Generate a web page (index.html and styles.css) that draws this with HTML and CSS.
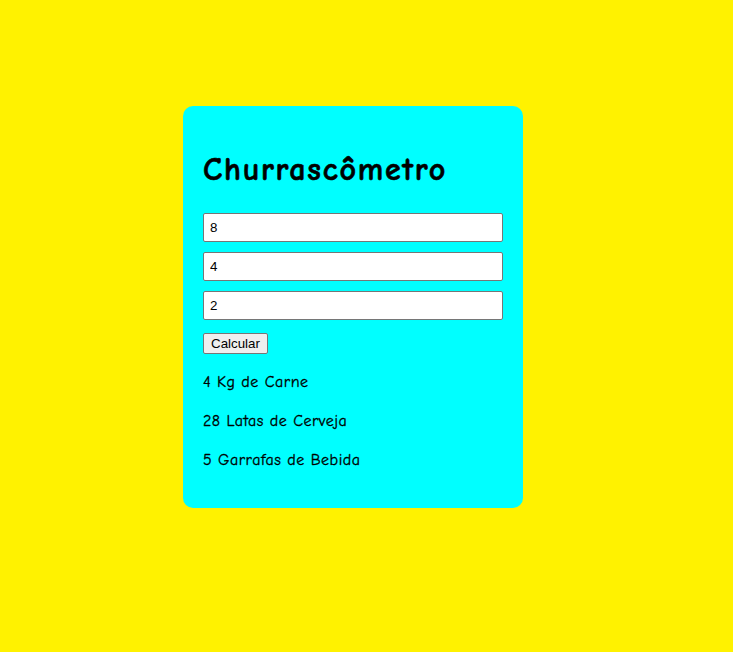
FILE: index.html
```html
<!DOCTYPE html>
<html lang="pt-BR">
<head>
<meta charset="utf-8">
<title>Churrascômetro</title>
<link rel="stylesheet" href="styles.css">
</head>
<body>
<main class="card">
  <h1 class="title">Churrascômetro</h1>
  <input class="field" type="number" value="8">
  <input class="field" type="number" value="4">
  <input class="field" type="number" value="2">
  <button class="btn">Calcular</button>
  <div class="results">
    <p class="result">4 Kg de Carne</p>
    <p class="result">28 Latas de Cerveja</p>
    <p class="result">5 Garrafas de Bebida</p>
  </div>
</main>
</body>
</html>
```
FILE: styles.css
```css
html, body {
  margin: 0;
  padding: 0;
}
body {
  background: #fff200;
  min-height: 652px;
  padding: 106px 0 0 183px;
  box-sizing: border-box;
  font-family: "Comic Sans MS", "Comic Neue", "DejaVu Sans", sans-serif;
}
.card {
  width: 340px;
  box-sizing: border-box;
  background: #00ffff;
  border-radius: 10px;
  padding: 20px;
  display: flex;
  flex-direction: column;
  align-items: flex-start;
}
.title {
  font-size: 32px;
  line-height: 45px;
  font-weight: bold;
  margin: 21px 0 21px 0;
  letter-spacing: 1.75px;
  -webkit-text-stroke: 0.6px #000;
}
.field {
  width: 300px;
  height: 29px;
  box-sizing: border-box;
  margin: 0 0 10px 0;
  padding: 0 6px;
  border: 1px solid #767676;
  border-radius: 2px;
  background: #fff;
  font-family: "Liberation Sans", Arial, sans-serif;
  font-size: 13.33px;
  color: #000;
  -moz-appearance: textfield;
}
.field::-webkit-inner-spin-button,
.field::-webkit-outer-spin-button {
  -webkit-appearance: none;
  margin: 0;
}
.btn {
  margin-top: 3px;
  height: 21px;
  padding: 0 7px;
  font-family: "Liberation Sans", Arial, sans-serif;
  font-size: 13.33px;
  color: #000;
  background: #efefef;
  border: 1px solid #767676;
  border-radius: 2px;
}
.results {
  display: flex;
  flex-direction: column;
  padding-top: 1px;
}
.result {
  margin: 16px 0 0 0;
  font-size: 16px;
  line-height: 23px;
  letter-spacing: 0.5px;
  -webkit-text-stroke: 0.3px #000;
}
.result:last-child {
  margin-bottom: 16px;
}
```
